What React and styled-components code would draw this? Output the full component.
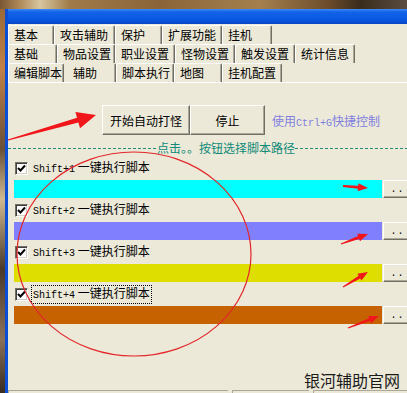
import React from "react";
import styled, { createGlobalStyle } from "styled-components";

const GlobalStyle = createGlobalStyle`
  html, body {
    margin: 0;
    padding: 0;
    background: #1a140c;
  }
  body {
    font-family: "Noto Sans CJK SC", sans-serif;
  }
`;

const tabRows = [
  [
    ["基本", 46],
    ["攻击辅助", 61],
    ["保护", 47],
    ["扩展功能", 60],
    ["挂机", 50],
  ],
  [
    ["基础", 49],
    ["物品设置", 58],
    ["职业设置", 60],
    ["怪物设置", 60],
    ["触发设置", 60],
    ["统计信息", 60],
  ],
  [
    ["编辑脚本", 56],
    ["辅助", 52, true],
    ["脚本执行", 58],
    ["地图", 48],
    ["挂机配置", 60],
  ],
];

const scripts = [
  { key: "Shift+1", color: "#00ffff" },
  { key: "Shift+2", color: "#8080ff" },
  { key: "Shift+3", color: "#dede00" },
  { key: "Shift+4", color: "#c66300", focused: true },
];

const arrows = [
  { from: [8, 140], to: [96, 115], head: 19, headW: 17, tailW: 1, shaftW: 5 },
  { from: [343, 186], to: [368, 188], head: 10, headW: 8, tailW: 2, shaftW: 3 },
  { from: [341, 244], to: [368, 234], head: 10, headW: 8, tailW: 1, shaftW: 3 },
  { from: [343, 287], to: [368, 272], head: 10, headW: 8, tailW: 1, shaftW: 3 },
  { from: [348, 328], to: [379, 316], head: 10, headW: 8, tailW: 1, shaftW: 3 },
];

// polygon for a tapered arrow drawn over the screenshot
const arrowPoints = ({ from, to, head, headW, tailW, shaftW }) => {
  const [x1, y1] = from;
  const [x2, y2] = to;
  const len = Math.hypot(x2 - x1, y2 - y1);
  const ux = (x2 - x1) / len;
  const uy = (y2 - y1) / len;
  const bx = x2 - ux * head;
  const by = y2 - uy * head;
  const pt = (x, y, k) => `${x - uy * k},${y + ux * k}`;
  return [
    pt(x1, y1, tailW / 2),
    pt(bx, by, shaftW / 2),
    pt(bx, by, headW / 2),
    `${x2},${y2}`,
    pt(bx, by, -headW / 2),
    pt(bx, by, -shaftW / 2),
    pt(x1, y1, -tailW / 2),
  ].join(" ");
};

const App = () => {
  return (
    <Screen>
      <GlobalStyle />
      <TopArt />
      <Main>
        <LeftArt />
        <Window>
          <TitleBar />
          <Panel>
            <Tabs>
              {tabRows.map((row, i) => (
                <TabRow key={i}>
                  {row.map(([label, w, active]) => (
                    <Tab key={label} $w={w} $active={active}>
                      {label}
                    </Tab>
                  ))}
                </TabRow>
              ))}
            </Tabs>

            <Content>
              <ButtonBar>
                <BigButton $w={88}>开始自动打怪</BigButton>
                <BigButton $w={75}>停止</BigButton>
                <Hint>
                  使用<Mono>Ctrl+G</Mono>快捷控制
                </Hint>
              </ButtonBar>

              <Divider>
                <Dash $w={149} />
                <DividerText>点击。。按钮选择脚本路径</DividerText>
                <Dash />
              </Divider>

              {scripts.map((s) => (
                <ScriptBlock key={s.key}>
                  <CheckLine>
                    <CheckBox>
                      <svg width="9" height="9" viewBox="0 0 9 9">
                        <path
                          d="M1 4 L3.5 6.5 L8 1.5"
                          fill="none"
                          stroke="#000"
                          strokeWidth="2"
                        />
                      </svg>
                    </CheckBox>
                    <CheckLabel $focused={s.focused}>
                      <Mono>{s.key}</Mono> 一键执行脚本
                    </CheckLabel>
                  </CheckLine>
                  <PathRow>
                    <ColorBar $color={s.color} />
                    <SmallButton>..</SmallButton>
                  </PathRow>
                </ScriptBlock>
              ))}

              <Watermark>银河辅助官网</Watermark>
            </Content>

            <StatusBar>
              <Pane $w={219} />
              <Pane $w={76} />
              <Pane $w={100} />
            </StatusBar>
          </Panel>
        </Window>
      </Main>

      <Annotations width="407" height="393" viewBox="0 0 407 393">
        <ellipse
          cx="134"
          cy="254"
          rx="117"
          ry="102"
          fill="none"
          stroke="#e3262a"
          strokeWidth="1.2"
        />
        {arrows.map((a, i) => (
          <polygon key={i} points={arrowPoints(a)} fill="#f0161a" />
        ))}
      </Annotations>
    </Screen>
  );
};

export default App;

const Screen = styled.div`
  position: relative;
  width: 407px;
  height: 393px;
  overflow: hidden;
  display: flex;
  flex-direction: column;
`;

const TopArt = styled.div`
  flex: 0 0 9px;
  background: linear-gradient(
    90deg,
    #7a5632 0,
    #b08a5a 20px,
    #d8c6a0 40px,
    #a07a48 70px,
    #8a6438 160px,
    #a5804e 260px,
    #6a4a2a 330px,
    #3a2c1c 360px,
    #5a4c40 407px
  );
`;

const Main = styled.div`
  flex: 1;
  display: flex;
  min-height: 0;
`;

const LeftArt = styled.div`
  flex: 0 0 5px;
  background: linear-gradient(
    180deg,
    #9a6a38 0,
    #c08048 60px,
    #6a5038 140px,
    #d0b890 190px,
    #4a3a2a 260px,
    #8a7058 330px,
    #2a2018 393px
  );
`;

const Window = styled.div`
  flex: 1;
  min-width: 0;
  display: flex;
  flex-direction: column;
  border-left: 3px solid #0b4ed6;
`;

const TitleBar = styled.div`
  flex: 0 0 15px;
  background: linear-gradient(
    180deg,
    #3d8af6 0,
    #1263e8 3px,
    #0a5ae4 10px,
    #0646c6 15px
  );
`;

const Panel = styled.div`
  flex: 1;
  min-height: 0;
  display: flex;
  flex-direction: column;
  background: #ece9d8;
  padding-top: 1px;
`;

const Tabs = styled.div`
  display: flex;
  flex-direction: column;
`;

const TabRow = styled.div`
  display: flex;
  height: 19px;
`;

const Tab = styled.div`
  flex: 0 0 ${(p) => p.$w}px;
  box-sizing: border-box;
  padding-left: ${(p) => (p.$active ? 8 : 5)}px;
  border-top: 1px solid ${(p) => (p.$active ? "#ece9d8" : "#fff")};
  border-left: 1px solid ${(p) => (p.$active ? "#ece9d8" : "#fff")};
  border-right: 1px solid #716f64;
  box-shadow: inset -1px 0 #aca899;
  border-radius: 2px 2px 0 0;
  font-size: 12px;
  line-height: 17px;
  color: #000;
  white-space: nowrap;
`;

const Content = styled.div`
  flex: 1;
  min-height: 0;
  display: flex;
  flex-direction: column;
  border-top: 1px solid #fff;
`;

const ButtonBar = styled.div`
  display: flex;
  align-items: center;
  margin-top: 22px;
  padding-left: 94px;
`;

const BigButton = styled.div`
  width: ${(p) => p.$w}px;
  height: 30px;
  box-sizing: border-box;
  display: flex;
  align-items: center;
  justify-content: center;
  background: #ece9d8;
  border-top: 1px solid #fff;
  border-left: 1px solid #fff;
  border-right: 1px solid #716f64;
  border-bottom: 1px solid #716f64;
  box-shadow: inset -1px -1px #aca899;
  font-size: 12px;
  color: #000;
`;

const Hint = styled.div`
  margin-left: 7px;
  font-size: 12px;
  color: #7f7fdf;
  white-space: nowrap;
`;

const Mono = styled.span`
  font-family: "Liberation Mono", monospace;
  font-size: 10px;
`;

const Divider = styled.div`
  display: flex;
  align-items: center;
  height: 14px;
  margin: 6px 0;
`;

const Dash = styled.div`
  height: 1px;
  flex: ${(p) => (p.$w ? `0 0 ${p.$w}px` : "1")};
  background: repeating-linear-gradient(
    90deg,
    #1f8c78 0 3px,
    transparent 3px 5px
  );
`;

const DividerText = styled.div`
  font-size: 12px;
  line-height: 14px;
  color: #0f8a78;
  white-space: nowrap;
`;

const ScriptBlock = styled.div`
  display: flex;
  flex-direction: column;
  margin-bottom: 5px;
`;

const CheckLine = styled.div`
  display: flex;
  align-items: center;
  height: 14px;
  padding-left: 7px;
`;

const CheckBox = styled.div`
  width: 13px;
  height: 13px;
  box-sizing: border-box;
  display: flex;
  align-items: center;
  justify-content: center;
  background: #fff;
  border-top: 1px solid #716f64;
  border-left: 1px solid #716f64;
  border-right: 1px solid #fff;
  border-bottom: 1px solid #fff;
  box-shadow: inset 1px 1px #404040, inset -1px -1px #d4d0c8;
`;

const CheckLabel = styled.div`
  margin-left: 4px;
  padding: 0 1px;
  font-size: 12px;
  line-height: 14px;
  color: #000;
  white-space: nowrap;
  outline: ${(p) => (p.$focused ? "1px dotted #000" : "none")};
`;

const PathRow = styled.div`
  display: flex;
  margin-top: 5px;
  padding-left: 6px;
  height: 18px;
`;

const ColorBar = styled.div`
  flex: 0 0 368px;
  background: ${(p) => p.$color};
`;

const SmallButton = styled.div`
  flex: 0 0 28px;
  margin-left: 1px;
  box-sizing: border-box;
  display: flex;
  align-items: center;
  justify-content: center;
  background: #ece9d8;
  border-top: 1px solid #fff;
  border-left: 1px solid #fff;
  border-bottom: 1px solid #716f64;
  box-shadow: inset 0 -1px #aca899;
  font-family: "Liberation Mono", monospace;
  font-size: 10px;
  letter-spacing: 1px;
  color: #000;
`;

const Watermark = styled.div`
  margin-top: auto;
  align-self: flex-end;
  padding-right: 7px;
  font-size: 16px;
  line-height: 20px;
  color: #1a1a1a;
`;

const StatusBar = styled.div`
  flex: 0 0 3px;
  display: flex;
  gap: 4px;
`;

const Pane = styled.div`
  flex: 0 0 ${(p) => p.$w}px;
  border-top: 1px solid #aca899;
  border-left: 1px solid #aca899;
`;

const Annotations = styled.svg`
  position: absolute;
  left: 0;
  top: 0;
  pointer-events: none;
`;
